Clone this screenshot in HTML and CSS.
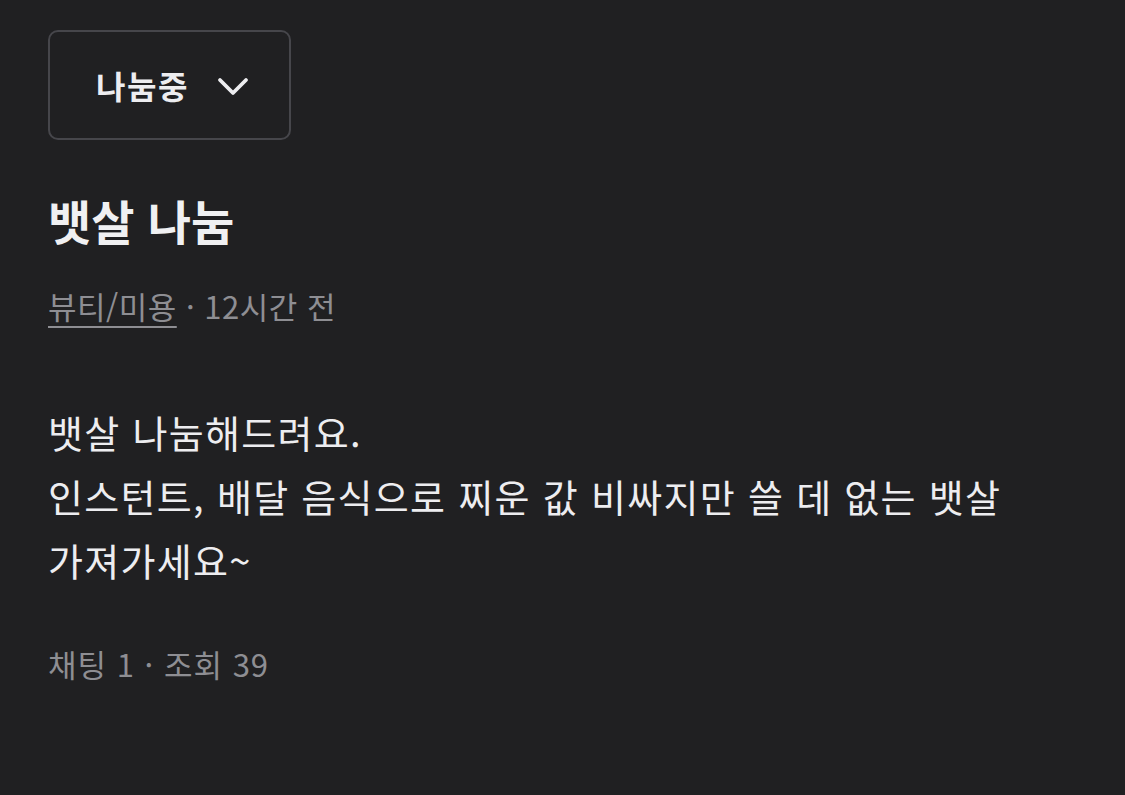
FILE: index.html
```html
<!DOCTYPE html>
<html lang="ko">
<head>
<meta charset="utf-8">
<link rel="stylesheet" href="styles.css">
</head>
<body>
<main class="post">
  <button class="status-btn" type="button">
    <span class="status-label">나눔중</span>
    <svg class="chevron" width="32" height="22" viewBox="0 0 32 22" aria-hidden="true">
      <path d="M3 5 L16 18 L29 5" fill="none" stroke="#ededf0" stroke-width="3.8" stroke-linecap="round" stroke-linejoin="round"/>
    </svg>
  </button>
  <h1 class="title">뱃살 나눔</h1>
  <p class="meta"><a class="category" href="#">뷰티/미용</a> · 12시간 전</p>
  <p class="body-text">뱃살 나눔해드려요.<br>인스턴트, 배달 음식으로 찌운 값 비싸지만 쓸 데 없는 뱃살 가져가세요~</p>
  <p class="stats">채팅 1 · 조회 39</p>
</main>
</body>
</html>
```
FILE: styles.css
```css
html, body {
  margin: 0;
  padding: 0;
  background: #202022;
}
body {
  font-family: "Noto Sans CJK KR", "Noto Sans", sans-serif;
  color: #ededf0;
}
.post {
  padding: 30px 48px 0 48px;
  display: flex;
  flex-direction: column;
  align-items: flex-start;
}
.status-btn {
  box-sizing: border-box;
  width: 243px;
  height: 110px;
  border: 2px solid #46464b;
  border-radius: 10px;
  background: transparent;
  display: flex;
  align-items: center;
  gap: 28px;
  padding: 0 0 0 46px;
  font-family: inherit;
  cursor: pointer;
}
.status-label {
  font-size: 32px;
  font-weight: 700;
  color: #ededf0;
  letter-spacing: 1.5px;
}
.chevron {
  display: block;
  margin-top: 2px;
}
.title {
  margin: 48px 0 0 0;
  font-size: 47px;
  font-weight: 700;
  line-height: 64px;
  color: #f0f0f2;
  letter-spacing: 0;
}
.meta {
  margin: 34px 0 0 0;
  font-size: 31px;
  line-height: 40px;
  color: #8e8e93;
  letter-spacing: 0.5px;
}
.category {
  color: #8e8e93;
  text-decoration: underline;
  text-underline-offset: 7px;
  text-decoration-thickness: 2px;
}
.body-text {
  margin: 74px 0 0 0;
  font-size: 38px;
  line-height: 64px;
  letter-spacing: 1.3px;
  color: #ededf0;
  max-width: 1029px;
  word-break: keep-all;
}
.stats {
  margin: 52px 0 0 0;
  font-size: 31px;
  line-height: 40px;
  letter-spacing: 1px;
  color: #8e8e93;
}
```
